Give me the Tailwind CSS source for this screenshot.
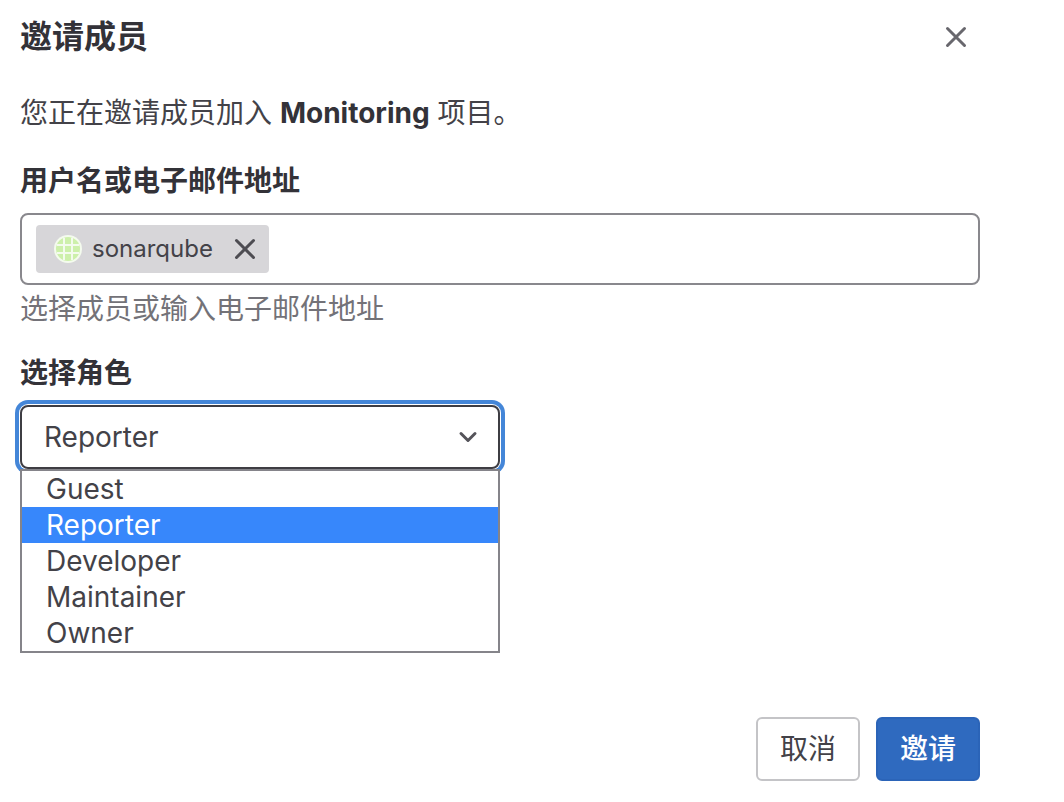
<!DOCTYPE html>
<html lang="zh-CN">
<head>
  <meta charset="UTF-8">
  <meta name="viewport" content="width=device-width, initial-scale=1.0">
  <title>邀请成员</title>
  <script src="https://cdn.jsdelivr.net/npm/@tailwindcss/browser@4"></script>
</head>
<body class="bg-white text-[#434248] font-['Inter','Noto_Sans_CJK_SC',sans-serif] text-[28px] leading-10">
  <form class="pt-[17px] pb-5 pl-5 pr-21">

    <!-- Header -->
    <header class="flex items-center justify-between">
      <h1 class="text-[32px] leading-10 font-bold text-[#333238]">邀请成员</h1>
      <button type="button" aria-label="关闭" class="w-8 h-8 mr-2 flex items-center justify-center text-[#68676d]">
        <svg class="w-6 h-6" viewBox="0 0 24 24" fill="none" stroke="currentColor" stroke-width="3" stroke-linecap="round">
          <path d="M3.500 3.500l17 17M20.500 3.500l-17 17"/>
        </svg>
      </button>
    </header>

    <p class="mt-9">您正在邀请成员加入 <strong class="font-bold text-[#333238]">Monitoring</strong> 项目。</p>

    <!-- Members -->
    <label for="members" class="block mt-7 font-bold text-[#333238]">用户名或电子邮件地址</label>
    <div class="mt-3 h-18 flex items-center border-2 border-[#89888d] rounded-lg px-3.5">
      <span class="h-12 flex items-center bg-[#d7d6d9] rounded-sm pl-4 pr-2.5 text-2xl">
        <svg class="w-8 h-8 mr-2" viewBox="0 0 32 32">
          <circle cx="16" cy="16" r="14" fill="#f4fbee"/>
          <circle cx="16" cy="16" r="12" fill="#cdf0ab"/>
          <path d="M12 5v22M20 5v22M5 12h22M5 20h22" stroke="#f4fbee" stroke-width="2"/>
        </svg>
        sonarqube
        <button type="button" aria-label="移除 sonarqube" class="ml-4.5 w-7 h-7 flex items-center justify-center text-[#4d4c52]">
          <svg class="w-6 h-6" viewBox="0 0 24 24" fill="none" stroke="currentColor" stroke-width="3" stroke-linecap="round">
            <path d="M3.500 3.500l17 17M20.500 3.500l-17 17"/>
          </svg>
        </button>
      </span>
      <input id="members" type="text" class="flex-1 min-w-0 ml-3 outline-none">
    </div>
    <p class="mt-1 text-[#737278]">选择成员或输入电子邮件地址</p>

    <!-- Role -->
    <label for="role" class="block mt-6 font-bold text-[#333238]">选择角色</label>
    <div class="relative mt-3 w-1/2">
      <select id="role" class="block w-full h-16 appearance-none bg-white border-2 border-[#3e3d43] rounded-lg pl-5.5 pr-14 outline-none shadow-[0_0_0_1px_#fff,0_0_0_5px_#4486d8]">
        <option>Guest</option>
        <option selected>Reporter</option>
        <option>Developer</option>
        <option>Maintainer</option>
        <option>Owner</option>
      </select>
      <svg class="absolute right-5.5 top-5.5 w-5 h-5 pointer-events-none" viewBox="0 0 20 20" fill="none" stroke="#55545a" stroke-width="3" stroke-linecap="round" stroke-linejoin="round">
        <path d="M3 6.500l7 7 7-7"/>
      </svg>
      <ul role="listbox" class="absolute left-0 right-0 top-full bg-white border-2 border-[#85848a] leading-9">
        <li role="option" class="pl-6">Guest</li>
        <li role="option" aria-selected="true" class="pl-6 bg-[#3787fb] text-white">Reporter</li>
        <li role="option" class="pl-6">Developer</li>
        <li role="option" class="pl-6">Maintainer</li>
        <li role="option" class="pl-6">Owner</li>
      </ul>
    </div>

    <!-- Actions -->
    <footer class="mt-62 flex justify-end gap-4">
      <button type="button" class="h-16 px-5.5 border-2 border-[#c4c4c7] rounded-md">取消</button>
      <button type="submit" class="h-16 px-5.5 border-2 border-[#2b64b8] rounded-md bg-[#2f6abf] text-white font-medium">邀请</button>
    </footer>
  </form>
</body>
</html>
